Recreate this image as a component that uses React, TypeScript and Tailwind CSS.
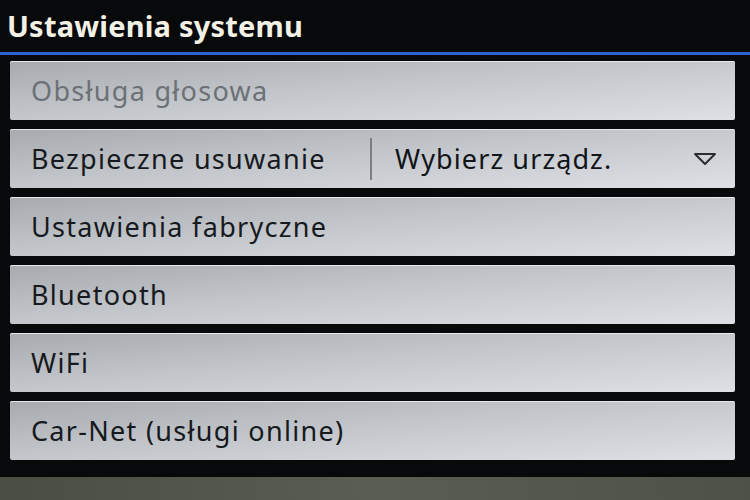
const rows = [
  { label: "Obsługa głosowa", disabled: true },
  { label: "Bezpieczne usuwanie", value: "Wybierz urządz." },
  { label: "Ustawienia fabryczne" },
  { label: "Bluetooth" },
  { label: "WiFi" },
  { label: "Car-Net (usługi online)" },
];

function Row({ label, value, disabled }: { label: string; value?: string; disabled?: boolean }) {
  return (
    <div className="flex h-[59px] items-center rounded-[2px] bg-[linear-gradient(175deg,#a7abaf_0%,#c2c5c9_45%,#dee0e5_100%)] shadow-[inset_0_1px_0_#e6e8ec]">
      <span
        className={
          "w-[360px] shrink-0 pl-[21px] pt-[2px] text-[27px] tracking-[1.3px] " +
          (disabled ? "text-[#6c7176]" : "text-[#16191d]")
        }
      >
        {label}
      </span>
      {value && (
        <>
          <div className="h-[42px] w-[2px] bg-[#7b7f84]" />
          <span className="flex-1 pl-[23px] pt-[2px] text-[27px] tracking-[1.1px] text-[#111418]">{value}</span>
          <svg width="24" height="14" viewBox="0 0 24 14" className="mr-[18px]">
            <path d="M2 2 L22 2 L12 12 Z" fill="none" stroke="#2a2e34" strokeWidth="2" strokeLinejoin="round" />
          </svg>
        </>
      )}
    </div>
  );
}

export default function App() {
  return (
    <div className="flex h-[500px] w-[750px] flex-col bg-[#08090b] font-['Noto_Sans',sans-serif]">
      <div className="flex h-[52px] items-center pl-[7px]">
        <h1 className="text-[29px] font-bold tracking-[0.2px] text-[#f3f1e6]">Ustawienia systemu</h1>
      </div>
      <div className="h-[3px] bg-[#2f62d8]" />
      <div className="flex flex-col gap-[9px] pl-[10px] pr-[15px] pt-[6px]">
        {rows.map((r) => (
          <Row key={r.label} {...r} />
        ))}
      </div>
      <div className="mt-auto h-[23px] bg-[linear-gradient(90deg,#4a4d42,#5a5d52_50%,#4e5147)]" />
    </div>
  );
}
